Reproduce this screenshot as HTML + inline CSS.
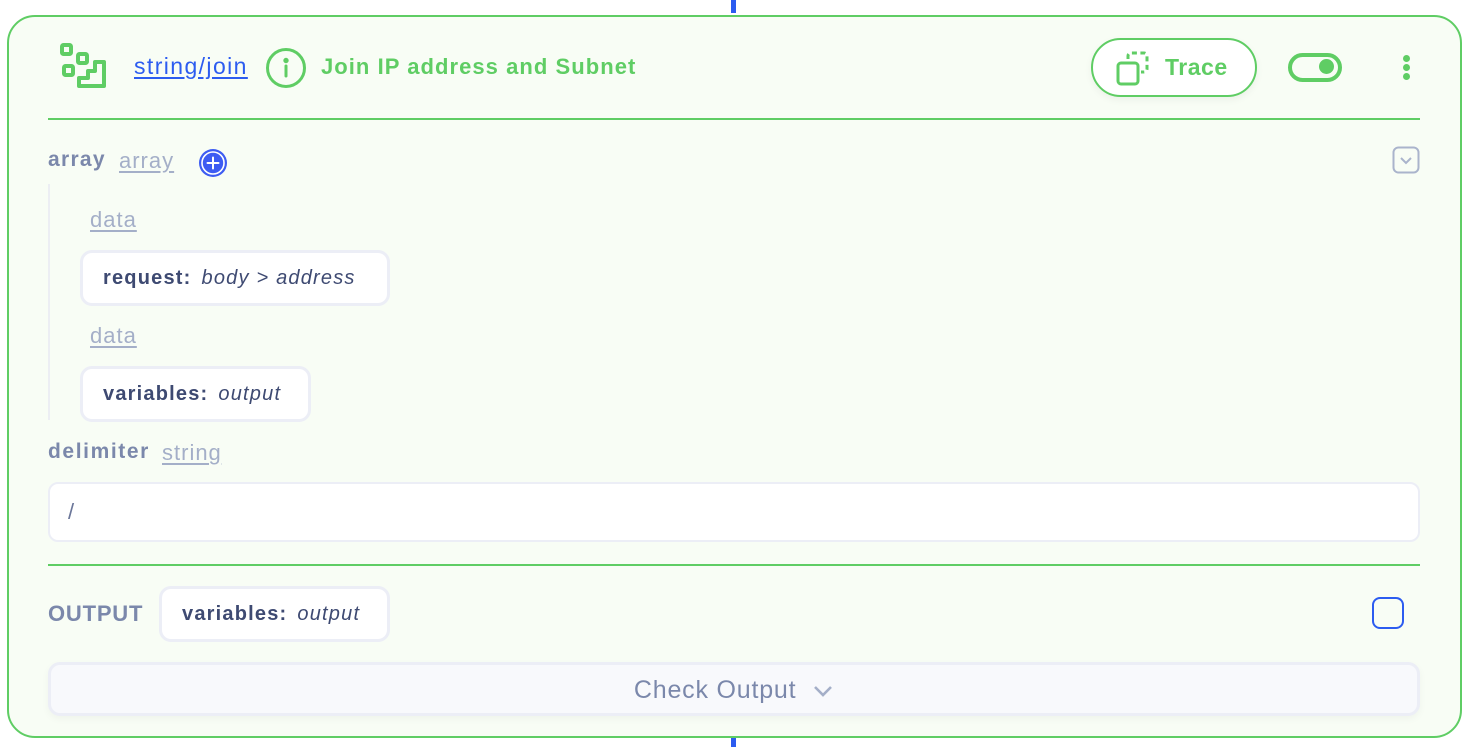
<!DOCTYPE html>
<html><head><meta charset="utf-8"><style>
*{box-sizing:border-box;margin:0;padding:0}
body{width:1473px;height:747px;background:#fff;font-family:"Liberation Sans",sans-serif;position:relative;overflow:hidden}
.a{position:absolute}
.card{left:7px;top:15px;width:1455px;height:723px;border:2px solid #5fcd64;border-radius:28px;background:#f8fdf5}
.hr{height:2px;background:#5fcd64}
.pill{background:#fff;border:3px solid #eceef6;border-radius:12px;font-size:20px;color:#3e4a72;white-space:nowrap;letter-spacing:1.2px}
.pill b{font-weight:bold;margin-right:10px}
.pill i{font-style:italic}
.lbl{font-size:21px;font-weight:bold;color:#7b88ab;letter-spacing:1.3px}
.typ{font-size:22px;color:#a4afc8;text-decoration:underline;text-underline-offset:3px;letter-spacing:1px}
</style></head><body>
<div class="a" style="left:731px;top:0;width:5px;height:13px;background:#2c5cf0"></div>
<div class="a" style="left:731px;top:738px;width:5px;height:9px;background:#2c5cf0"></div>
<div class="a card"></div>
<svg class="a" style="left:56px;top:40px" width="54" height="52" viewBox="56 40 54 52" fill="none" stroke="#5fcd64" stroke-width="4" stroke-linejoin="round">
<rect x="62" y="45" width="9" height="9" rx="1.5"/><rect x="78" y="54" width="9" height="9" rx="1.5"/><rect x="64" y="66" width="9" height="9" rx="1.5"/>
<path d="M79 86 L104 86 L104 62 L95 62 L95 71 L88 71 L88 78 L79 78 Z"/></svg>
<div class="a" style="left:134px;top:53px;font-size:23px;color:#2c5cf0;text-decoration:underline;text-underline-offset:3px;letter-spacing:1.4px">string/join</div>
<svg class="a" style="left:265px;top:47px" width="42" height="42" viewBox="0 0 42 42" fill="none" stroke="#5fcd64" stroke-width="3"><circle cx="21" cy="21" r="18.5"/><path d="M21 19v10" stroke-linecap="round"/><circle cx="21" cy="13.5" r="1.2" fill="#5fcd64"/></svg>
<div class="a" style="left:321px;top:54px;font-size:22px;font-weight:bold;color:#5fcd64;letter-spacing:1.05px">Join IP address and Subnet</div>
<div class="a" style="left:1091px;top:38px;width:166px;height:59px;border:2px solid #5fcd64;border-radius:30px;background:#fff;box-shadow:0 3px 8px rgba(0,0,0,.05)"></div>
<svg class="a" style="left:1115px;top:50px" width="40" height="40" viewBox="0 0 40 40" fill="none" stroke="#5fcd64" stroke-width="3"><rect x="3" y="13" width="20" height="21" rx="3"/><path d="M13 9V6a3 3 0 0 1 3-3h13a3 3 0 0 1 3 3v13a3 3 0 0 1-3 3h-3" stroke-dasharray="5 3.5"/></svg>
<div class="a" style="left:1165px;top:54px;font-size:23px;font-weight:bold;color:#5fcd64;letter-spacing:0.5px">Trace</div>
<div class="a" style="left:1288px;top:53px;width:54px;height:29px;border:4px solid #5fcd64;border-radius:15px"></div>
<div class="a" style="left:1319px;top:59px;width:15px;height:15px;border-radius:50%;background:#5fcd64"></div>
<div class="a" style="left:1403px;top:55px;width:7px;height:7px;border-radius:50%;background:#5fcd64"></div>
<div class="a" style="left:1403px;top:64px;width:7px;height:7px;border-radius:50%;background:#5fcd64"></div>
<div class="a" style="left:1403px;top:73px;width:7px;height:7px;border-radius:50%;background:#5fcd64"></div>
<div class="a hr" style="left:48px;top:118px;width:1372px"></div>
<div class="a lbl" style="left:48px;top:148px">array</div>
<div class="a typ" style="left:119px;top:148px">array</div>
<svg class="a" style="left:198px;top:148px" width="30" height="30" viewBox="0 0 30 30"><circle cx="15" cy="15" r="14" fill="#3d5cf2"/><circle cx="15" cy="15" r="11" fill="none" stroke="#fff" stroke-width="1.6"/><path d="M15 9.5v11M9.5 15h11" stroke="#fff" stroke-width="2" stroke-linecap="round"/></svg>
<svg class="a" style="left:1392px;top:146px" width="28" height="28" viewBox="0 0 28 28" fill="none" stroke="#aab4cc" stroke-width="2"><rect x="1.5" y="1.5" width="25" height="25" rx="5"/><path d="M9 12l5 5 5-5"/></svg>
<div class="a" style="left:48px;top:184px;width:2px;height:236px;background:#eceef3"></div>
<div class="a typ" style="left:90px;top:207px">data</div>
<div class="a pill" style="left:80px;top:250px;width:310px;height:56px;padding:14px 0 0 20px"><b>request:</b><i>body &gt; address</i></div>
<div class="a typ" style="left:90px;top:323px">data</div>
<div class="a pill" style="left:80px;top:366px;width:231px;height:56px;padding:14px 0 0 20px"><b>variables:</b><i>output</i></div>
<div class="a lbl" style="left:48px;top:440px;letter-spacing:1.6px">delimiter</div>
<div class="a typ" style="left:162px;top:440px">string</div>
<div class="a" style="left:48px;top:482px;width:1372px;height:60px;background:#fff;border:2px solid #eceef6;border-radius:10px;font-size:22px;color:#6b7699;padding:15px 0 0 18px">/</div>
<div class="a hr" style="left:48px;top:564px;width:1372px"></div>
<div class="a lbl" style="left:48px;top:601px;font-size:22px;letter-spacing:0.8px">OUTPUT</div>
<div class="a pill" style="left:159px;top:586px;width:231px;height:56px;padding:14px 0 0 20px"><b>variables:</b><i>output</i></div>
<div class="a" style="left:1372px;top:597px;width:32px;height:32px;border:2px solid #2c5cf0;border-radius:8px"></div>
<div class="a" style="left:48px;top:662px;width:1372px;height:54px;background:#f8f9fc;border:3px solid #eceef6;border-radius:12px;box-shadow:0 3px 8px rgba(0,0,0,.04);text-align:center;font-size:25px;color:#7b88ab;padding-top:11px;letter-spacing:0.8px">Check Output <svg width="22" height="14" viewBox="0 0 22 14" style="margin-left:8px"><path d="M3 3l8 8 8-8" fill="none" stroke="#a4afc8" stroke-width="2.6"/></svg></div>
</body></html>
